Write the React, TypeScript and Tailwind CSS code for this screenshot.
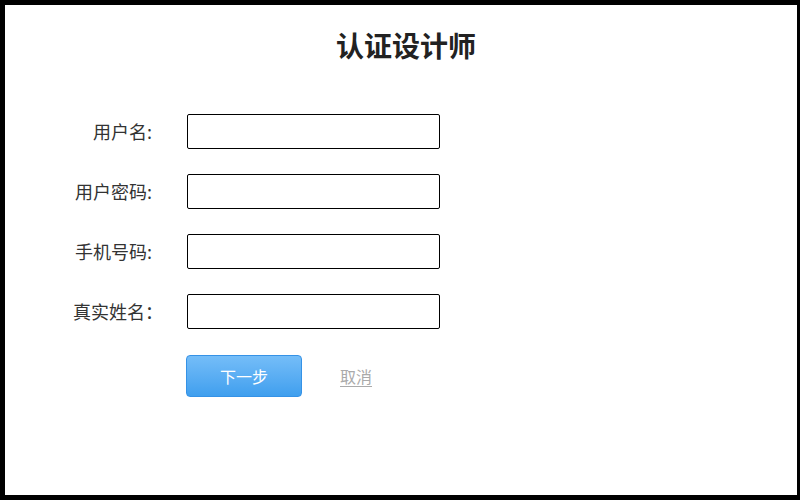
import { useState } from "react";

const FIELDS = [
  { key: "username", label: "用户名", colon: ":", type: "text" },
  { key: "password", label: "用户密码", colon: ":", type: "password" },
  { key: "phone", label: "手机号码", colon: ":", type: "tel" },
  { key: "realname", label: "真实姓名", colon: "：", type: "text" },
];

export default function App() {
  const [form, setForm] = useState<Record<string, string>>({});

  return (
    <div className="w-[800px] h-[500px] bg-black pt-[5px] pl-[5px] pr-[3px] pb-[5px] font-['Noto_Sans_CJK_SC','Noto_Sans',sans-serif]">
      <div className="h-full bg-white">
        <h1 className="pt-[22px] text-center text-[28px] leading-[36px] font-bold text-[#222] pl-[10px]">认证设计师</h1>

        <div className="mt-[51px] flex flex-col gap-[25px]">
          {FIELDS.map((f) => (
            <div key={f.key} className="flex items-center">
              <label className="w-[147px] text-right text-[18px] text-[#333] whitespace-nowrap">
                {f.label}
                {f.colon === ":" ? (
                  <span>:</span>
                ) : (
                  <span className="inline-block w-[7px] overflow-visible">：</span>
                )}
              </label>
              <input
                type={f.type}
                className="ml-[35px] w-[253px] h-[35px] border border-black rounded-[2px] px-2 text-[14px] outline-none"
                value={form[f.key] ?? ""}
                onChange={(e) => setForm({ ...form, [f.key]: e.target.value })}
              />
            </div>
          ))}

          <div className="flex items-center mt-px">
            <button className="ml-[181px] w-[116px] h-[42px] rounded-[4px] border border-[#3592e6] bg-gradient-to-b from-[#74bdf8] to-[#3f9fee] text-white text-[16px]">
              下一步
            </button>
            <a href="#" className="ml-[38px] text-[16px] text-[#aaa] underline underline-offset-[3px]">取消</a>
          </div>
        </div>
      </div>
    </div>
  );
}
